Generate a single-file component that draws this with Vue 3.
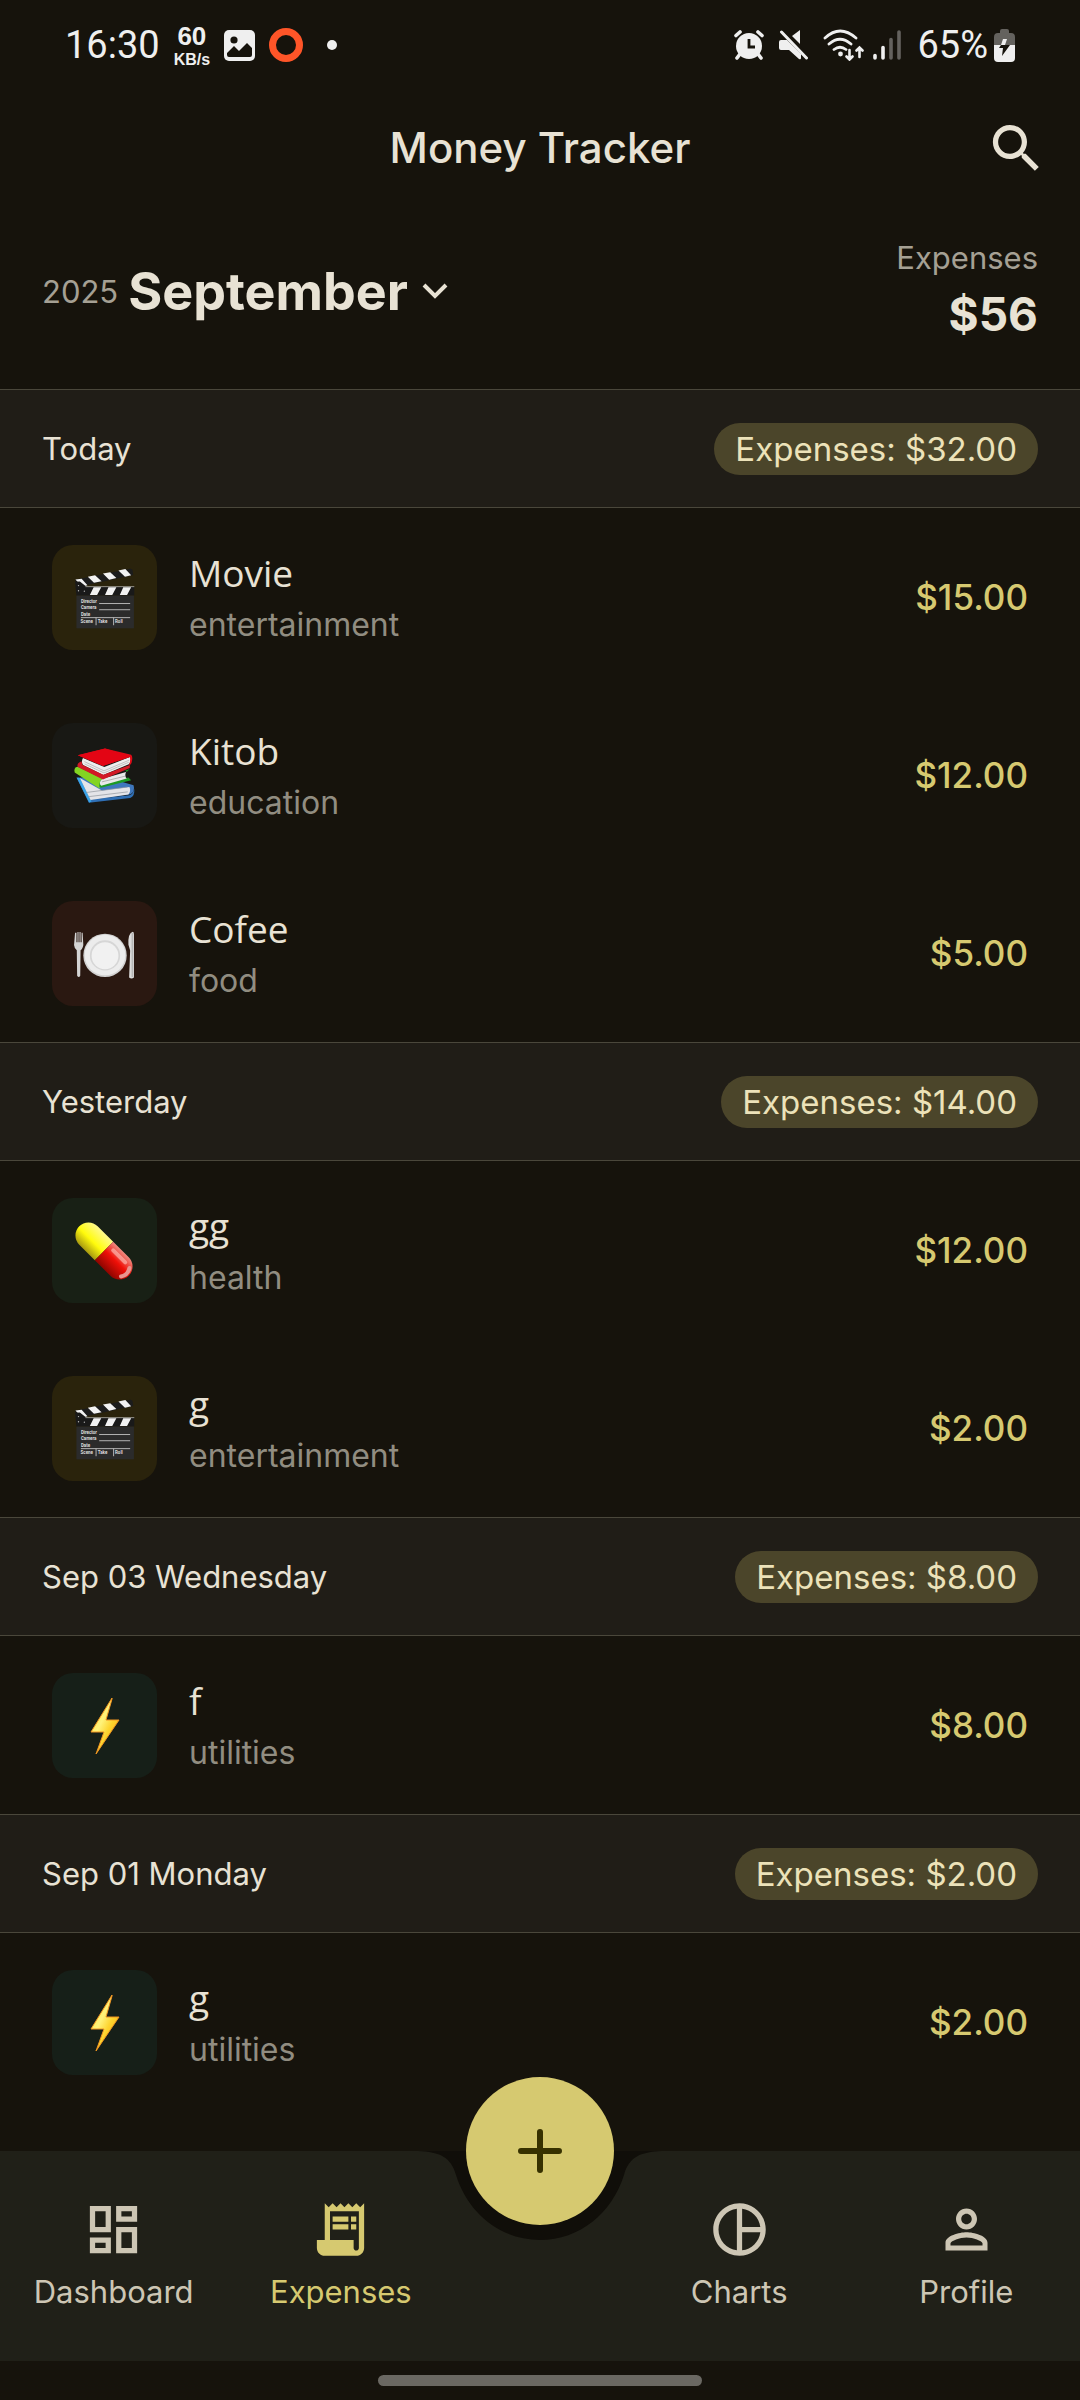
<script setup>
import { ref } from 'vue'

const active = ref('Expenses')

const groups = [
  {
    label: 'Today',
    total: '$32.00',
    items: [
      { name: 'Movie', category: 'entertainment', amount: '$15.00' },
      { name: 'Kitob', category: 'education', amount: '$12.00' },
      { name: 'Cofee', category: 'food', amount: '$5.00' },
    ],
  },
  {
    label: 'Yesterday',
    total: '$14.00',
    items: [
      { name: 'gg', category: 'health', amount: '$12.00' },
      { name: 'g', category: 'entertainment', amount: '$2.00' },
    ],
  },
  {
    label: 'Sep 03 Wednesday',
    total: '$8.00',
    items: [{ name: 'f', category: 'utilities', amount: '$8.00' }],
  },
  {
    label: 'Sep 01 Monday',
    total: '$2.00',
    items: [{ name: 'g', category: 'utilities', amount: '$2.00' }],
  },
]

const leftTabs = [
  {
    label: 'Dashboard',
    path: 'M19 5v2h-4V5h4M9 5v6H5V5h4m10 8v6h-4v-6h4M9 17v2H5v-2h4M21 3h-8v6h8V3zM11 3H3v10h8V3zm10 8h-8v10h8V11zm-10 4H3v6h8v-6z',
  },
  {
    label: 'Expenses',
    path: 'M19.5 3.5L18 2l-1.5 1.5L15 2l-1.5 1.5L12 2l-1.5 1.5L9 2 7.5 3.5 6 2v14H3v3c0 1.66 1.34 3 3 3h12c1.66 0 3-1.34 3-3V2l-1.5 1.5zM19 19c0 .55-.45 1-1 1s-1-.45-1-1v-3H8V5h11v14zM9 7h6v2H9zM16 7h2v2h-2zM9 10h6v2H9zM16 10h2v2h-2z',
  },
]

const rightTabs = [
  {
    label: 'Charts',
    path: 'M12 2C6.48 2 2 6.48 2 12s4.48 10 10 10 10-4.48 10-10S17.52 2 12 2zm1 2.07c3.61.45 6.48 3.33 6.93 6.93H13V4.07zM4 12c0-4.06 3.07-7.44 7-7.93v15.87c-3.93-.5-7-3.88-7-7.94zm9 7.93V13h6.93c-.45 3.61-3.32 6.48-6.93 6.93z',
  },
  {
    label: 'Profile',
    path: 'M12 6c1.1 0 2 .9 2 2s-.9 2-2 2-2-.9-2-2 .9-2 2-2m0 9c2.7 0 5.8 1.29 6.1 2.2v.9H5.9v-.9C6.2 16.290 9.310 15 12 15m0-11C9.790 4 8 5.790 8 8s1.790 4 4 4 4-1.790 4-4-1.790-4-4-4zm0 9c-2.670 0-8 1.340-8 4v3h16v-3c0-2.660-5.330-4-8-4z',
  },
]
</script>

<template>
  <div class="screen">
    <div class="status">
      <div class="status-left">
        <span class="clock">16:30</span>
        <span class="speed"><b>60</b><small>KB/s</small></span>
        <svg class="s-image" viewBox="0 0 31 31" aria-hidden="true">
          <rect width="31" height="31" rx="5" fill="#efefef" />
          <circle cx="10" cy="10" r="3.600" fill="#16130c" />
          <path d="M3 23l7-7 5 5 8-8 5 5v7q0 2-2 2H5q-2 0-2-2z" fill="#16130c" />
        </svg>
        <svg class="s-ring" viewBox="0 0 34 34" aria-hidden="true">
          <circle cx="17" cy="17" r="13.500" fill="none" stroke="#ff5528" stroke-width="7" />
        </svg>
        <span class="dot"></span>
      </div>
      <div class="status-right">
        <svg class="s-alarm" viewBox="0 0 30 30" aria-hidden="true">
          <g fill="none" stroke="#efefef" stroke-width="3.600" stroke-linecap="round">
            <path d="M2 5.500L6 2M28 5.500L24 2M6 24l-3 4M24 24l3 4" />
          </g>
          <circle cx="15" cy="16" r="13" fill="#efefef" />
          <path d="M15 9v8h6" fill="none" stroke="#16130c" stroke-width="2.800" />
        </svg>
        <svg class="s-mute" viewBox="0 0 30 30" aria-hidden="true">
          <path d="M0 12q0-2 2-2h6l14 14v4q0 2-2 1l-10-9H2q-2 0-2-2zM13 6l8-6v14z" fill="#efefef" />
          <path d="M5.500 1l25 26" stroke="#16130c" stroke-width="2.500" />
          <path d="M2.500 2l25 26" stroke="#efefef" stroke-width="3" stroke-linecap="round" />
        </svg>
        <svg class="s-wifi" viewBox="0 0 41 32" aria-hidden="true">
          <g fill="none" stroke="#efefef" stroke-width="2.800" stroke-linecap="round">
            <path d="M2 9Q17-5 33 9M6 15q11-9.500 22 0M11 20.500q6-4.500 12 0" />
            <path d="M26.500 21v9M23.500 27.500l3 3 3-3M36.500 28v-9M33.500 21.500l3-3 3 3" stroke-width="2.600" />
          </g>
          <circle cx="17.500" cy="25" r="2.400" fill="#efefef" />
        </svg>
        <svg class="s-signal" viewBox="0 0 28 30" aria-hidden="true">
          <g stroke="#efefef" stroke-width="3.600" stroke-linecap="round">
            <path d="M2 25.500v2.500M10 17.500V28" />
            <path d="M18 9.500V28M26 2v26" stroke="#64625e" />
          </g>
        </svg>
        <span class="percent">65%</span>
        <svg class="s-battery" viewBox="0 0 21 33" aria-hidden="true">
          <path d="M6 4V2q0-2 2-2h5q2 0 2 2v2h2q4 0 4 4v8H0V8q0-4 4-4z" fill="#64625e" />
          <path d="M0 16h21v13q0 4-4 4H4q-4 0-4-4z" fill="#efefef" />
          <path d="M9 10h4l-2 6h-4z" fill="#efefef" />
          <path d="M7 16h9L8 27l1-8H5z" fill="#16130c" />
        </svg>
      </div>
    </div>

    <header class="appbar">
      <h1>Money Tracker</h1>
      <button class="search" type="button" aria-label="Search">
        <svg viewBox="0 0 24 24" aria-hidden="true">
          <path d="M15.500 14h-.790l-.280-.270C15.410 12.590 16 11.110 16 9.500 16 5.910 13.090 3 9.500 3S3 5.910 3 9.500 5.910 16 9.500 16c1.610 0 3.090-.590 4.230-1.570l.270.280v.790l5 4.990L20.490 19l-4.990-5zm-6 0C7.010 14 5 11.990 5 9.500S7.010 5 9.500 5 14 7.010 14 9.500 11.990 14 9.500 14z" />
        </svg>
      </button>
    </header>

    <section class="summary">
      <button class="month" type="button">
        <span class="year">2025</span>
        <span class="month-name">September</span>
        <svg viewBox="0 0 26 18" aria-hidden="true">
          <path d="M2 2l11 11L24 2" fill="none" stroke="#e8e2d4" stroke-width="4" />
        </svg>
      </button>
      <div class="total">
        <span class="total-label">Expenses</span>
        <strong>$56</strong>
      </div>
    </section>

    <main class="list">
      <section v-for="group in groups" :key="group.label">
        <div class="day">
          <h2>{{ group.label }}</h2>
          <span class="pill">Expenses: {{ group.total }}</span>
        </div>
        <ul>
          <li v-for="item in group.items" :key="item.name">
            <span class="tile" :class="item.category">
              <svg v-if="item.category === 'entertainment'" viewBox="153 127 305 305" aria-hidden="true">
                <path d="M220 228L380 196q6-1 7 5l2 13-137 30-27-2z" fill="#1c1c1c" />
                <g fill="#f2f2f2">
                  <path d="M221 227l18-2 17 19-15 4zM257 219l21-4 19 17-22 5zM301 210l21-4 18 17-21 5zM346 201l20-4 17 18-18 4z" />
                </g>
                <path d="M220 234l14-1 20 16h138v25H224z" fill="#191919" />
                <path d="M250 248h142" stroke="#c8c8c8" stroke-width="2" />
                <path d="M274 250h22l-12 22h-21zM317 250h23l-12 22h-21zM360 250h23l-12 22h-21z" fill="#f2f2f2" />
                <rect x="224" y="274" width="167" height="95" fill="#2b2b2b" />
                <g fill="#bbb"><circle cx="230" cy="245" r="2" /><circle cx="230" cy="260" r="2" /><circle cx="247" cy="261" r="2" /></g>
                <path d="M290 297h90M290 315h90M237 338h143M281 338v22M332 338v22" stroke="#c8c8c8" stroke-width="2.500" fill="none" />
                <g class="slate">
                  <text x="237" y="295">Director</text>
                  <text x="237" y="314">Camera</text>
                  <text x="237" y="333">Date</text>
                  <text x="236" y="354">Scene</text>
                  <text x="286" y="354">Take</text>
                  <text x="336" y="354">Roll</text>
                </g>
              </svg>
              <svg v-else-if="item.category === 'education'" viewBox="153 646 305 305" aria-hidden="true">
                <path d="M228 805l38 65 115-17q14-8 9-26l-90-26z" fill="#3e77bd" />
                <path d="M224 804l36 74 120-14q14-4 12-26-4 16-14 18l-114 12-32-64z" fill="#2f6fb5" />
                <path d="M225 805l36 72 7-3-34-68z" fill="#3aa4e6" />
                <path d="M234 806l31 64 110-16q8-10 3-22l-80 10z" fill="#e4e4e8" />
                <path d="M252 848l120-16M259 860l114-14" stroke="#8f949c" stroke-width="2" />
                <path d="M219 776l76 58 88-22-8-8-76 16-60-48z" fill="#1d9a24" />
                <path d="M219 790q-4-14 8-17l73 34q-14 12-8 30z" fill="#83d422" />
                <path d="M300 808l68-20q-5 12 2 19l-74 21q-10-8 4-20z" fill="#e9e9e9" />
                <path d="M298 817l69-17" stroke="#999" stroke-width="2" />
                <path d="M366 784l12-4-8 8z" fill="#1d9a24" />
                <path d="M243 748l62 26 76-30q4 14-5 22l-74 31-59-29q-6-10 0-20z" fill="#eee" />
                <path d="M247 758l57 27 73-31M248 765l56 26 72-31" stroke="#aaa" stroke-width="2" fill="none" />
                <path d="M228 740l79-20 76 18q6 6 1 24-2 5-8 8 6-14 3-25l-78 25z" fill="#df0b17" />
                <path d="M228 740l73 31 82-28-76-23z" fill="#e30514" />
                <path d="M239 757q-16 6-11 17l73 36 78-33v-9l-77 28-61-29z" fill="#d21925" />
              </svg>
              <svg v-else-if="item.category === 'food'" viewBox="153 1163 305 305" aria-hidden="true">
                <circle cx="307" cy="1321" r="63" fill="#d2d2d2" />
                <circle cx="307" cy="1320" r="59" fill="#ececec" />
                <circle cx="307" cy="1321" r="44" fill="#d6d6d6" />
                <circle cx="307" cy="1322" r="39" fill="#f1f1f1" />
                <path d="M220 1255h4v28h3v-30h3v30h3v-30h3v30h3v-28h3l2 36q-2 12-8 15l-1 74q-4 8-9 0l-1-74q-7-4-8-15z" fill="#d4d4d4" />
                <path d="M388 1252q-15 4-13 38l5 17-3 78q7 6 14 0v-125q0-8-3-8z" fill="#dcdcdc" />
                <path d="M386 1256v128" stroke="#a9a9a9" stroke-width="3" />
              </svg>
              <svg v-else-if="item.category === 'health'" viewBox="0 0 105 105" aria-hidden="true">
                <defs>
                  <linearGradient id="pillYellow" x1="0" y1="0" x2="0" y2="1">
                    <stop offset="0" stop-color="#fff98c" /><stop offset=".550" stop-color="#fffb0c" /><stop offset="1" stop-color="#a89a10" />
                  </linearGradient>
                  <linearGradient id="pillRed" x1="0" y1="0" x2="0" y2="1">
                    <stop offset="0" stop-color="#f08a80" /><stop offset=".450" stop-color="#f01008" /><stop offset="1" stop-color="#8f0500" />
                  </linearGradient>
                </defs>
                <g transform="rotate(45 52 53)">
                  <path d="M52 40H30a13 13 0 0 0-13 13 13 13 0 0 0 13 13h22z" fill="url(#pillYellow)" />
                  <path d="M52 40h22a13 13 0 0 1 13 13 13 13 0 0 1-13 13H52z" fill="url(#pillRed)" />
                  <path d="M58 46h17" stroke="#ffc4bc" stroke-width="4" stroke-linecap="round" opacity=".600" />
                  <path d="M82 47q4 6 0 12" stroke="#e8958e" stroke-width="4" fill="none" stroke-linecap="round" />
                </g>
              </svg>
              <svg v-else viewBox="0 0 105 105" aria-hidden="true">
                <defs>
                  <linearGradient id="bolt" x1="0" y1="0" x2="1" y2="1">
                    <stop offset="0" stop-color="#ffe21a" /><stop offset=".400" stop-color="#fff27a" /><stop offset=".600" stop-color="#fdd32c" /><stop offset="1" stop-color="#f59d12" />
                  </linearGradient>
                </defs>
                <path d="M60 25L39 59h13l-8 22 23-34H54l6-21z" fill="url(#bolt)" stroke="#ef9420" stroke-width="1" stroke-linejoin="round" />
              </svg>
            </span>
            <div class="info">
              <span class="name">{{ item.name }}</span>
              <span class="category">{{ item.category }}</span>
            </div>
            <span class="amount">{{ item.amount }}</span>
          </li>
        </ul>
      </section>
    </main>

    <nav class="tabs">
      <a
        v-for="tab in leftTabs"
        :key="tab.label"
        href="#"
        :class="{ active: active === tab.label }"
        @click.prevent="active = tab.label"
      >
        <svg viewBox="0 0 24 24" aria-hidden="true"><path :d="tab.path" /></svg>
        <span>{{ tab.label }}</span>
      </a>
      <div class="dock">
        <svg class="notch" viewBox="0 0 260 90" aria-hidden="true">
          <path d="M8 0C30 1 41 6 46 24C58 62 90 89 130 89S202 62 214 24C219 6 230 1 252 0z" fill="#100e09" />
        </svg>
        <button class="fab" type="button" aria-label="Add expense">
          <svg viewBox="0 0 44 44" aria-hidden="true">
            <path d="M22 3v38M3 22h38" stroke="#373100" stroke-width="6" stroke-linecap="round" />
          </svg>
        </button>
      </div>
      <a
        v-for="tab in rightTabs"
        :key="tab.label"
        href="#"
        :class="{ active: active === tab.label }"
        @click.prevent="active = tab.label"
      >
        <svg viewBox="0 0 24 24" aria-hidden="true"><path :d="tab.path" /></svg>
        <span>{{ tab.label }}</span>
      </a>
    </nav>
    <div class="gesture"><span></span></div>
  </div>
</template>

<style>
body {
  background: #16130c;
}
</style>

<style scoped>
.screen {
  min-height: 100vh;
  display: flex;
  flex-direction: column;
  background: #16130c;
  color: #e8e2d4;
  font-family: Inter, "Liberation Sans", sans-serif;
  font-size: 31px;
  line-height: 40px;
}

button {
  padding: 0;
  border: 0;
  background: none;
  color: inherit;
  font: inherit;
  cursor: pointer;
}

svg {
  display: block;
  flex: none;
}

h1,
h2,
ul {
  margin: 0;
  padding: 0;
}

/* status bar */
.status {
  height: 90px;
  padding: 0 65px;
  display: flex;
  align-items: center;
  justify-content: space-between;
  font-family: Roboto, sans-serif;
  font-size: 38px;
  color: #efefef;
}

.status-left,
.status-right {
  display: flex;
  align-items: center;
}

.status-left {
  gap: 14px;
}

.speed {
  display: flex;
  flex-direction: column;
  align-items: center;
  font-family: "Liberation Sans", sans-serif;
  font-weight: 700;
}

.speed b {
  font-size: 26px;
  line-height: 30px;
}

.speed small {
  font-size: 16px;
  line-height: 18px;
}

.s-image { width: 31px; height: 31px; }
.s-ring { width: 34px; height: 34px; }
.s-alarm { width: 30px; height: 30px; margin-right: 15px; }
.s-mute { width: 30px; height: 30px; margin-right: 14px; }
.s-wifi { width: 41px; height: 32px; margin-right: 9px; }
.s-signal { width: 28px; height: 30px; margin-right: 16px; }
.s-battery { width: 21px; height: 33px; margin-left: 6px; }

.dot {
  width: 10px;
  height: 10px;
  margin-left: 10px;
  border-radius: 50%;
  background: #efefef;
}

/* app bar */
.appbar {
  height: 116px;
  padding: 0 32px;
  display: grid;
  grid-template-columns: 63px 1fr 63px;
  align-items: center;
}

.appbar h1 {
  grid-column: 2;
  text-align: center;
  font-size: 42px;
  line-height: 52px;
  font-weight: 500;
}

.search svg {
  width: 63px;
  height: 63px;
  fill: #e8e2d4;
}

/* month summary */
.summary {
  height: 183px;
  padding: 0 42px;
  display: flex;
  justify-content: space-between;
  align-items: flex-start;
}

.month {
  margin-top: 54px;
  display: flex;
  align-items: center;
}

.year {
  margin-right: 10px;
  color: #a5a094;
}

.month-name {
  margin-right: 14px;
  font-size: 52px;
  line-height: 64px;
  font-weight: 700;
}

.month svg {
  width: 26px;
  height: 18px;
}

.total {
  margin-top: 32px;
  display: flex;
  flex-direction: column;
  align-items: flex-end;
}

.total-label {
  color: #a5a094;
}

.total strong {
  font-size: 46px;
  line-height: 72px;
  font-weight: 700;
}

/* expense list */
.list {
  flex: 1;
}

.day {
  height: 117px;
  padding: 0 42px;
  display: flex;
  align-items: center;
  justify-content: space-between;
  background: #201d17;
  border-top: 1px solid #4a473b;
  border-bottom: 1px solid #4a473b;
}

.day h2 {
  font-size: 31px;
  font-weight: 400;
}

.pill {
  padding: 6px 21px;
  border-radius: 27px;
  background: #4b452a;
  color: #ece2b9;
  font-size: 33px;
}

li {
  height: 178px;
  padding: 0 52px;
  display: flex;
  align-items: center;
}

.tile {
  width: 105px;
  height: 105px;
  flex: none;
  border-radius: 21px;
}

.tile svg {
  width: 105px;
  height: 105px;
}

.entertainment { background: #2a230c; }
.education { background: #181814; }
.food { background: #2a1811; }
.health { background: #182015; }
.utilities { background: #161f18; }

.slate {
  font-family: Roboto, sans-serif;
  font-size: 13px;
  font-weight: 700;
  fill: #dedede;
}

.info {
  flex: 1;
  margin-left: 32px;
  display: flex;
  flex-direction: column;
}

.name {
  font-family: "Open Sans", sans-serif;
  font-size: 37px;
  line-height: 56px;
}

.info .category {
  color: #918d81;
  font-size: 32px;
  line-height: 48px;
}

.amount {
  color: #d6c970;
  font-size: 35px;
  font-weight: 500;
}

/* bottom navigation */
.tabs {
  height: 210px;
  display: flex;
  background: #202018;
}

.tabs a {
  flex: 1;
  padding-top: 47px;
  display: flex;
  flex-direction: column;
  align-items: center;
  gap: 11px;
  color: #cdc6b4;
  text-decoration: none;
}

.tabs a svg {
  width: 63px;
  height: 63px;
  fill: currentColor;
}

.tabs a.active {
  color: #d6c970;
}

.dock {
  position: relative;
  width: 171px;
}

.notch {
  position: absolute;
  top: 0;
  left: 50%;
  width: 260px;
  height: 90px;
  margin-left: -130px;
}

.fab {
  position: absolute;
  top: -74px;
  left: 50%;
  width: 148px;
  height: 148px;
  margin-left: -74px;
  display: grid;
  place-items: center;
  border-radius: 50%;
  background: #d6c970;
}

.fab svg {
  width: 44px;
  height: 44px;
}

.gesture {
  height: 39px;
  display: flex;
  align-items: center;
  justify-content: center;
}

.gesture span {
  width: 30%;
  height: 11px;
  border-radius: 6px;
  background: #6a6862;
}
</style>
